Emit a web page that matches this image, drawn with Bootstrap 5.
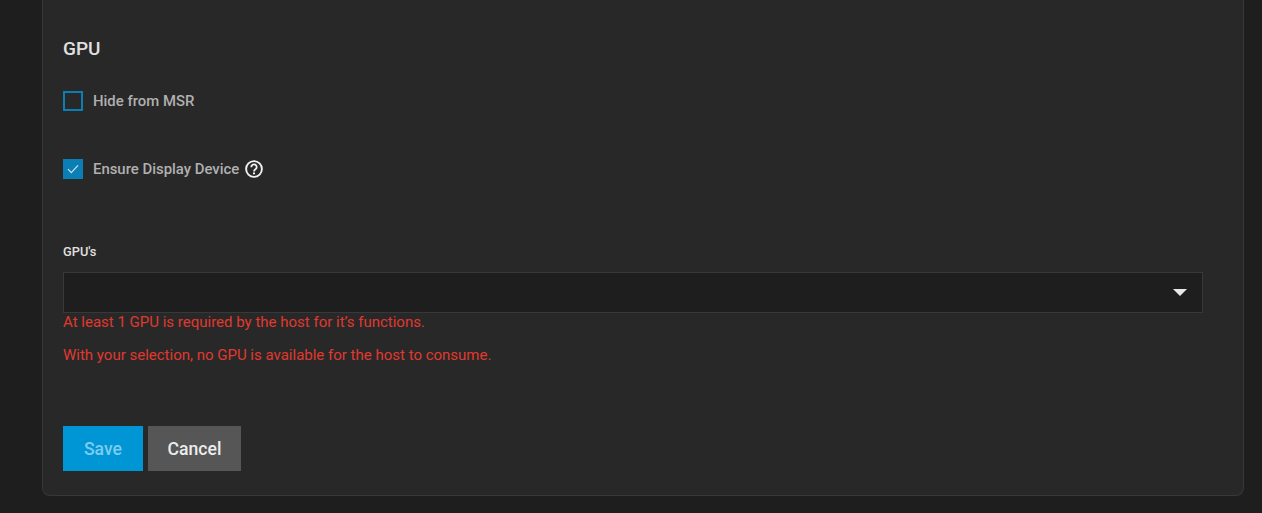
<!DOCTYPE html>
<html lang="en">
<head>
<meta charset="utf-8">
<title>GPU</title>
<link rel="stylesheet" href="https://cdn.jsdelivr.net/npm/bootstrap@5.3.0/dist/css/bootstrap.min.css">
<style>
html, body { height: 513px; overflow: hidden; }
body { background: #1e1e1e; font-family: Roboto, "Liberation Sans", sans-serif; color: #e0e0e0; }
.shell { margin: 0 18px 0 42px; height: 496px; background: #282828; border: 1px solid #383838; border-top: 0; border-radius: 0 0 8px 8px; padding: 38px 40px 0 20px; }
.gpu-title { font-size: 19px; line-height: 21px; font-weight: 500; color: #e0e0e0; margin: 0 0 32px; }
.check-row { display: flex; align-items: center; height: 20px; margin-bottom: 48px; gap: 10px; color: #b0b0b0; font-size: 14.9px; font-weight: 500; line-height: 20px; }
.tick-box { width: 20px; height: 20px; border: 2px solid #0a7fb5; flex: none; display: flex; align-items: center; justify-content: center; }
.tick-box.on { background: #0a7fb5; }
.help-ico { margin-left: -4px; }
.field-label { font-size: 12.8px; font-weight: 500; line-height: 14px; color: #e0e0e0; margin: 66px 0 13px; }
.select-box { height: 41px; background: #1e1e1e; border: 1px solid #383838; display: flex; align-items: center; justify-content: flex-end; padding-right: 15px; }
.caret-shape { width: 0; height: 0; border-left: 7px solid transparent; border-right: 7px solid transparent; border-top: 7px solid #e8e8e8; }
.err-line { color: #e0392f; font-size: 15px; line-height: 18px; margin: 0; }
.err-one { margin-top: 0; }
.err-two { margin-top: 15px; }
.act-row { margin-top: 62px; gap: 5px; }
.act-save, .act-cancel { height: 45px; border: 0; border-radius: 0; font-size: 17.6px; font-weight: 500; padding: 2px 0 0; font-family: inherit; }
.act-save, .act-save:disabled { width: 80px; background: #0095d5; color: #7cccf0; opacity: 1; }
.act-cancel, .act-cancel:hover { width: 93px; background: #565656; color: #ececec; }
</style>
</head>
<body>
<main class="shell">
  <h2 class="gpu-title">GPU</h2>
  <div class="check-row">
    <span class="tick-box"></span>
    <span>Hide from MSR</span>
  </div>
  <div class="check-row">
    <span class="tick-box on">
      <svg width="12" height="10" viewBox="0 0 12 10" fill="none" stroke="#cfe3ee" stroke-width="1.2"><path d="M1 5.2 4.3 8.6 11 1.4"/></svg>
    </span>
    <span>Ensure Display Device</span>
    <svg class="help-ico" width="18" height="18" viewBox="0 0 18 18" fill="none"><circle cx="9" cy="9" r="7.9" stroke="#f0f0f0" stroke-width="1.9"/><path d="M6.3 7.2a2.7 2.7 0 1 1 4.2 2.1c-.9.6-1.5 1-1.5 2.1" stroke="#f0f0f0" stroke-width="1.8"/><circle cx="9" cy="13.4" r="1.1" fill="#f0f0f0"/></svg>
  </div>
  <div class="field-label">GPU's</div>
  <div class="select-box"><span class="caret-shape"></span></div>
  <p class="err-line err-one">At least 1 GPU is required by the host for it’s functions.</p>
  <p class="err-line err-two">With your selection, no GPU is available for the host to consume.</p>
  <div class="d-flex act-row">
    <button type="button" class="btn act-save" disabled>Save</button>
    <button type="button" class="btn act-cancel">Cancel</button>
  </div>
</main>
<script src="https://cdn.jsdelivr.net/npm/bootstrap@5.3.0/dist/js/bootstrap.bundle.min.js"></script>
</body>
</html>
